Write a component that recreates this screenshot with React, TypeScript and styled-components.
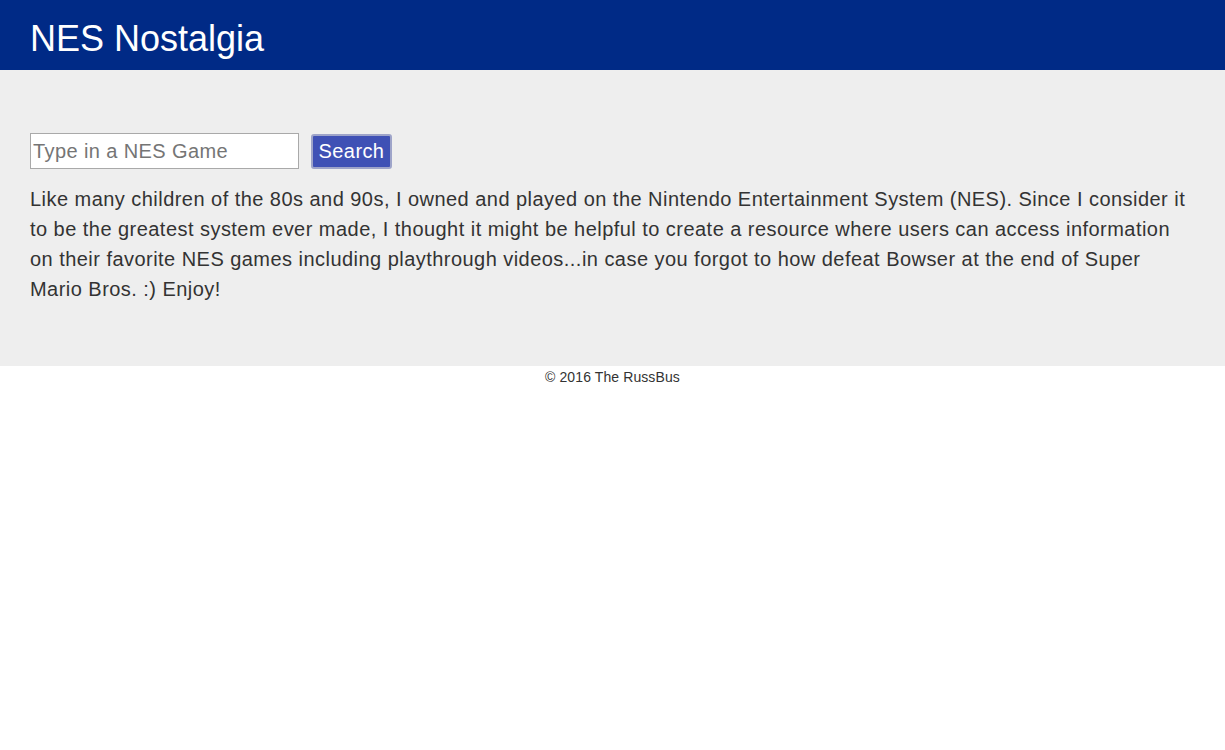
import React from "react";
import styled, { createGlobalStyle } from "styled-components";

const Global = createGlobalStyle`
  html, body { margin: 0; padding: 0; background: #fff; }
  body { font-family: "Liberation Sans", Arial, sans-serif; color: #333; }
  * { box-sizing: border-box; }
`;

const Header = styled.header`
  height: 70px;
  background: #002a86;
  padding: 7px 30px 0;
  display: flex;
  align-items: center;
`;

const Title = styled.h1`
  margin: 0;
  font-size: 36px;
  font-weight: 400;
  color: #fff;
  line-height: 1;
`;

const Main = styled.main`
  background: #eee;
  padding: 63px 30px 62px;
`;

const SearchRow = styled.form`
  display: flex;
  align-items: center;
  gap: 12px;
`;

const Input = styled.input`
  width: 269px;
  height: 36px;
  border: 1px solid #a9a9a9;
  background: #fff;
  font-family: "Liberation Sans", Arial, sans-serif;
  font-size: 20px;
  letter-spacing: 0.4px;
  padding: 0 2px;
  color: #333;
  &::placeholder { color: #757575; }
`;

const Button = styled.button`
  width: 81px;
  height: 35px;
  background: #3f51b5;
  color: #fff;
  border: 2px solid #9ea4c9;
  border-radius: 3px;
  font-family: "Liberation Sans", Arial, sans-serif;
  font-size: 20px;
  letter-spacing: 0.4px;
  padding: 0;
`;

const Intro = styled.p`
  margin: 15px 0 0;
  font-size: 20px;
  line-height: 30px;
  letter-spacing: 0.46px;
  color: #333;
`;

const Footer = styled.footer`
  text-align: center;
  font-size: 14px;
  line-height: 20px;
  letter-spacing: 0.1px;
  padding-top: 1px;
  color: #333;
`;

export default function App() {
  return (
    <>
      <Global />
      <Header>
        <Title>NES Nostalgia</Title>
      </Header>
      <Main>
        <SearchRow onSubmit={(e) => e.preventDefault()}>
          <Input type="text" placeholder="Type in a NES Game" />
          <Button type="submit">Search</Button>
        </SearchRow>
        <Intro>
          Like many children of the 80s and 90s, I owned and played on the Nintendo Entertainment System (NES). Since I consider it to be the greatest system ever made, I thought it might be helpful to create a resource where users can access information on their favorite NES games including playthrough videos...in case you forgot to how defeat Bowser at the end of Super Mario Bros. :) Enjoy!
        </Intro>
      </Main>
      <Footer>© 2016 The RussBus</Footer>
    </>
  );
}
